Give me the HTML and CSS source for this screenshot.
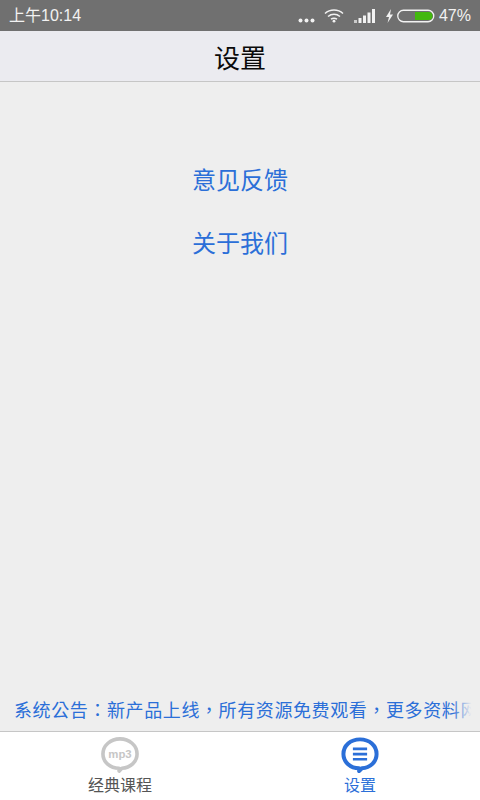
FILE: index.html
```html
<!DOCTYPE html>
<html lang="zh">
<head>
<meta charset="utf-8">
<title>设置</title>
<link rel="stylesheet" href="styles.css">
</head>
<body>
<div class="app">
  <div class="status">
    <span class="time">上午10:14</span>
    <div class="status-right">
      <svg class="ic-dots" width="17" height="5" viewBox="0 0 17 5"><circle cx="2.5" cy="2.5" r="2" fill="#f2f2f2"/><circle cx="8.5" cy="2.5" r="2" fill="#f2f2f2"/><circle cx="14.5" cy="2.5" r="2" fill="#f2f2f2"/></svg>
      <svg class="ic-wifi" width="20" height="15" viewBox="0 0 20 15" fill="none" stroke="#f2f2f2"><path d="M1 5.5C6 .8 14 .8 19 5.5" stroke-width="1.5"/><path d="M4 8.5C7.5 5.5 12.5 5.5 16 8.5" stroke-width="1.5"/><path d="M7 11.2C8.8 10 11.2 10 13 11.2" stroke-width="1.5"/><circle cx="10" cy="13.2" r="1.4" fill="#f2f2f2" stroke="none"/></svg>
      <svg class="ic-signal" width="22" height="14" viewBox="0 0 22 14" fill="#f2f2f2"><rect x="0" y="11" width="3" height="3" opacity=".7"/><rect x="4.5" y="9" width="3" height="5"/><rect x="9" y="6.500" width="3" height="7.500"/><rect x="13.500" y="3.500" width="3" height="10.500"/><rect x="18" y="0" width="3" height="14"/></svg>
      <svg class="ic-bolt" width="9" height="14" viewBox="0 0 9 14" fill="#f2f2f2"><path d="M6 0 1 8h3l-1.500 6L8 5.500H5z"/></svg>
      <svg class="ic-batt" width="38" height="14" viewBox="0 0 38 14"><rect x=".75" y="1.250" width="36" height="11.500" rx="5.700" fill="none" stroke="#f2f2f2" stroke-width="1.300"/><path d="M18 3h13.500a4 4 0 0 1 0 8H18z" fill="#43b80e"/></svg>
      <span class="pct">47%</span>
    </div>
  </div>
  <header class="title-bar"><h1>设置</h1></header>
  <main class="content">
    <nav class="links">
      <a class="link">意见反馈</a>
      <a class="link">关于我们</a>
    </nav>
    <div class="notice">
      <span class="notice-text" lang="zh-Hant">系统公告：新产品上线，所有资源免费观看，更多资料网</span>
      <span class="notice-fade"></span>
    </div>
  </main>
  <footer class="tabs">
    <div class="tab">
      <svg class="tab-icon" width="38" height="36" viewBox="0 0 40 38">
        <path d="M22 33C31 32.500 38 26 38 18 38 9 30 2 20 2S2 9 2 18c0 8.500 7.500 15 17 15v3z" fill="none" stroke="#c6c6c6" stroke-width="3.800" stroke-linejoin="round"/>
        <text x="20" y="22.500" class="mp3">mp3</text>
      </svg>
      <span class="tab-label">经典课程</span>
    </div>
    <div class="tab active">
      <svg class="tab-icon" width="38" height="36" viewBox="0 0 40 38">
        <path d="M22 33C31 32.500 37.500 26 37.500 18 37.500 9 30 2.500 20 2.500S2.500 9 2.500 18c0 8.500 7.500 15 16.500 15v3z" fill="none" stroke="#2b6fd8" stroke-width="4.200" stroke-linejoin="round"/>
        <path d="M12.500 12.500h15M12.500 18h15M12.500 23.500h15" fill="none" stroke="#2b6fd8" stroke-width="2.800"/>
      </svg>
      <span class="tab-label">设置</span>
    </div>
  </footer>
</div>
</body>
</html>
```

FILE: styles.css
```css
* { box-sizing: border-box; }
html, body { margin: 0; padding: 0; }
body {
  width: 480px;
  height: 800px;
  overflow: hidden;
  font-family: "Liberation Sans", "Noto Sans CJK SC", sans-serif;
}
.app { display: flex; flex-direction: column; height: 800px; background: #eeeeee; }

.status {
  height: 31px;
  flex: none;
  display: flex;
  align-items: center;
  justify-content: space-between;
  padding: 0 9px 0 9px;
  background: #707070;
  color: #f2f2f2;
  font-size: 16px;
}
.time { margin-top: -3px; }
.status-right { display: flex; align-items: center; }
.ic-dots { margin-top: 9px; margin-right: 9px; }
.ic-wifi { margin-right: 10px; }
.ic-signal { margin-right: 9px; }
.ic-bolt { margin-right: 3px; }
.ic-batt { margin-right: 4px; }
.pct { font-size: 16px; margin-top: 1px; }

.title-bar {
  height: 51px;
  flex: none;
  display: flex;
  align-items: center;
  justify-content: center;
  background: #ebebf0;
  border-bottom: 1px solid #c6c6c6;
}
.title-bar h1 { margin: 0; font-size: 26px; font-weight: 400; color: #0a0a0a; }

.content { flex: 1; display: flex; flex-direction: column; justify-content: space-between; }
.links { display: flex; flex-direction: column; align-items: center; gap: 31px; padding-top: 83px; }
.link { font-size: 24px; line-height: 32px; color: #2b6fd8; }

.notice { position: relative; height: 36px; padding-left: 14px; overflow: hidden; white-space: nowrap; }
.notice-text {
  font-family: "Noto Sans CJK TC", sans-serif;
  font-size: 18px;
  line-height: 28px;
  letter-spacing: 0.600px;
  color: #2b6fd8;
}
.notice-fade {
  position: absolute;
  top: 0;
  right: 0;
  width: 28px;
  height: 100%;
  background: linear-gradient(to right, rgba(238,238,238,0), #eeeeee 70%);
}

.tabs {
  height: 69px;
  flex: none;
  display: flex;
  background: #ffffff;
  border-top: 1px solid #c6c6c6;
}
.tab { flex: 1; display: flex; flex-direction: column; align-items: center; padding-top: 5px; }
.tab-icon { display: block; }
.mp3 { font-family: "Liberation Sans", sans-serif; font-size: 12px; font-weight: 700; fill: #c6c6c6; text-anchor: middle; }
.tab-label { font-size: 16px; line-height: 20px; margin-top: 3px; color: #555555; }
.active .tab-label { color: #2b6fd8; }
```
